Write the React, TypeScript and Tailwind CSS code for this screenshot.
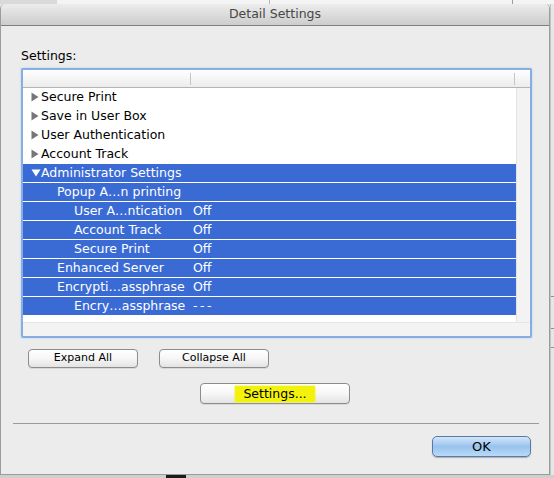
type Row = {
  level: 0 | 1 | 2
  tri?: 'right' | 'down'
  label: string
  value?: string
  sel?: boolean
}

const rows: Row[] = [
  { level: 0, tri: 'right', label: 'Secure Print' },
  { level: 0, tri: 'right', label: 'Save in User Box' },
  { level: 0, tri: 'right', label: 'User Authentication' },
  { level: 0, tri: 'right', label: 'Account Track' },
  { level: 0, tri: 'down', label: 'Administrator Settings', sel: true },
  { level: 1, label: 'Popup A…n printing', sel: true },
  { level: 2, label: 'User A…ntication', value: 'Off', sel: true },
  { level: 2, label: 'Account Track', value: 'Off', sel: true },
  { level: 2, label: 'Secure Print', value: 'Off', sel: true },
  { level: 1, label: 'Enhanced Server', value: 'Off', sel: true },
  { level: 1, label: 'Encrypti…assphrase', value: 'Off', sel: true },
  { level: 2, label: 'Encry…assphrase', value: '---', sel: true },
]

const indent = { 0: 'pl-[8px]', 1: 'pl-[34px]', 2: 'pl-[51px]' }

function Triangle({ dir }: { dir: 'right' | 'down' }) {
  if (dir === 'down')
    return (
      <svg width="10" height="8" viewBox="0 0 10 8" className="shrink-0">
        <polygon points="0.5,0.5 9.5,0.5 5,7.5" fill="#ffffff" />
      </svg>
    )
  return (
    <svg width="10" height="10" viewBox="0 0 10 10" className="shrink-0">
      <polygon points="0.5,0.5 7.5,5 0.5,9.5" fill="#767676" />
    </svg>
  )
}

function TreeRow({ r }: { r: Row }) {
  return (
    <div
      className={`h-[19px] flex items-center border-b border-white ${r.sel ? 'bg-[#3a6bd5] text-white' : 'text-black'}`}
    >
      <div className={`w-[168px] flex items-center ${indent[r.level]}`}>
        {r.tri && <Triangle dir={r.tri} />}
        <span className="whitespace-nowrap">{r.label}</span>
      </div>
      {r.value && (
        <span className={`pl-[2px] whitespace-nowrap ${r.value === '---' ? 'tracking-[2.5px]' : ''}`}>{r.value}</span>
      )}
    </div>
  )
}

function SettingsTable() {
  return (
    <div className="mt-[4px] ml-[20px] w-[511px] h-[270px] border-2 border-[#87aee2] rounded-[2px] shadow-[0_0_2px_#a9c8ee] flex flex-col bg-white">
      <div className="h-[18px] shrink-0 flex items-center border-b border-[#b4b4b4] bg-gradient-to-b from-white to-[#ececec]">
        <div className="w-[167px]" />
        <div className="w-[1px] h-[12px] bg-[#c4c4c4]" />
        <div className="w-[323px]" />
        <div className="w-[1px] h-[12px] bg-[#c4c4c4]" />
      </div>
      <div className="flex flex-1">
        <div className="w-[493px] flex flex-col">
          {rows.map((r, i) => (
            <TreeRow key={i} r={r} />
          ))}
        </div>
        <div className="flex-1 bg-[#f3f3f3] border-l border-[#e3e3e3]" />
      </div>
      <div className="h-[14px] shrink-0 bg-[#f3f3f3] border-t border-[#e6e6e6]" />
    </div>
  )
}

function SmallButton({ children }: { children: React.ReactNode }) {
  return (
    <div className="w-[110px] h-[19px] rounded-[4px] border border-[#8c8c8c] bg-gradient-to-b from-white via-[#f6f6f6] to-[#e3e3e3] flex items-center justify-center text-[11px] shadow-[0_1px_0_#d8d8d8]">
      {children}
    </div>
  )
}

function Dialog() {
  return (
    <div className="w-[550px] h-[471px] flex flex-col bg-[#ececec] border-l border-r border-b border-[#9c9c9c] rounded-t-[5px] overflow-hidden">
      <div className="h-[22px] shrink-0 flex items-center justify-center border-b border-[#7f7f7f] bg-gradient-to-b from-[#ececec] to-[#cdcdcd] text-[#474747]">
        Detail Settings
      </div>
      <div className="mt-[21px] ml-[20px] leading-[17px]">Settings:</div>
      <SettingsTable />
      <div className="mt-[11px] ml-[27px] flex gap-[21px]">
        <SmallButton>Expand All</SmallButton>
        <SmallButton>Collapse All</SmallButton>
      </div>
      <div className="mt-[15px] mx-auto w-[150px] h-[21px] rounded-[4px] border border-[#8c8c8c] bg-gradient-to-b from-white via-[#f7f7f7] to-[#e3e3e3] flex items-center justify-center shadow-[0_1px_0_#d8d8d8]">
        <span className="px-[8px] leading-[16px] bg-[#f2f20c] shadow-[0_0_2px_#f2f20c]">Settings...</span>
      </div>
      <div className="mt-[19px] ml-[12px] mr-[10px] h-[1px] bg-[#9b9b9b]" />
      <div className="mt-[12px] flex justify-end pr-[18px]">
        <div className="w-[99px] h-[21px] rounded-[5px] border border-[#5a78a6] bg-gradient-to-b from-[#d3e6f9] via-[#98c3ee] to-[#b8daf8] flex items-center justify-center text-[13px] shadow-[0_1px_1px_#b0b0b0]">
          OK
        </div>
      </div>
    </div>
  )
}

export default function App() {
  return (
    <div className="w-[554px] h-[478px] overflow-hidden flex flex-col bg-[#e6e6e6] text-[12.5px] font-['DejaVu_Sans','Liberation_Sans',sans-serif] text-black">
      <div className="h-[4px] shrink-0 flex bg-[#f4f4f4]">
        <div className="w-[57px] bg-[#d9d9d9]" />
        <div className="w-[213px] border-r border-[#b5b5b5]" />
        <div className="w-[243px] border-r border-[#9d9d9d]" />
      </div>
      <div className="flex shrink-0">
        <Dialog />
        <div className="flex-1 flex flex-col bg-[#e7e7e7] border-l border-[#c2c2c2]">
          <div className="h-[293px] border-b border-[#8f8f8f]" />
          <div className="h-[32px] border-b border-[#8f8f8f]" />
          <div className="h-[19px] border-b border-[#8f8f8f]" />
        </div>
      </div>
      <div className="flex-1 flex bg-[#cfcfcf]">
        <div className="w-[166px]" />
        <div className="w-[20px] bg-[#1a1a1a]" />
      </div>
    </div>
  )
}
